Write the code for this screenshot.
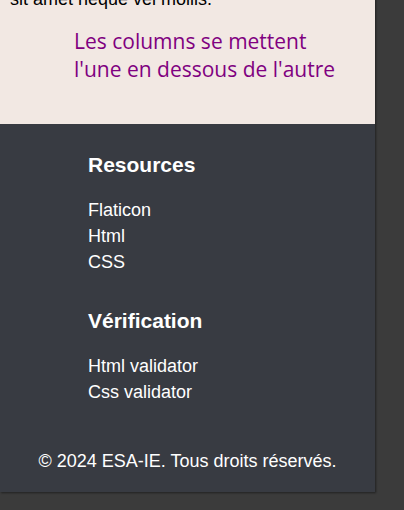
export default function App() {
  const resources = ['Flaticon', 'Html', 'CSS']
  const checks = ['Html validator', 'Css validator']

  return (
    <div className="min-h-[510px] bg-[#3b3b3b] overflow-hidden">
      <div className="w-[375px] shadow-[1px_1px_2px_rgba(0,0,0,0.45)]">
        <main className="bg-[#f2e8e3] px-[10px] pb-[41px] font-['Liberation_Sans',Arial,sans-serif]">
          <p className="-mt-[14px] text-[18px] leading-[26px] text-black">sit amet neque vel mollis.</p>
          <p className="mt-[15px] pl-[64px] font-['Open_Sans',sans-serif] text-[21px] leading-[28px] text-[#800080]">
            Les columns se mettent
            <br />
            l'une en dessous de l'autre
          </p>
        </main>

        <footer className="bg-[#383b42] pt-[27px] pb-[18px] text-white font-['Liberation_Sans',Arial,sans-serif]">
          <div className="pl-[88px]">
            <h3 className="text-[21px] leading-[28px] font-bold">Resources</h3>
            <ul className="mt-[18px] text-[18px] leading-[26px]">
              {resources.map(r => (
                <li key={r}>{r}</li>
              ))}
            </ul>

            <h3 className="mt-[32px] text-[21px] leading-[28px] font-bold">Vérification</h3>
            <ul className="mt-[18px] text-[18px] leading-[26px]">
              {checks.map(c => (
                <li key={c}>{c}</li>
              ))}
            </ul>
          </div>

          <p className="mt-[43px] text-center text-[18px] leading-[26px]">© 2024 ESA-IE. Tous droits réservés.</p>
        </footer>
      </div>
    </div>
  )
}
